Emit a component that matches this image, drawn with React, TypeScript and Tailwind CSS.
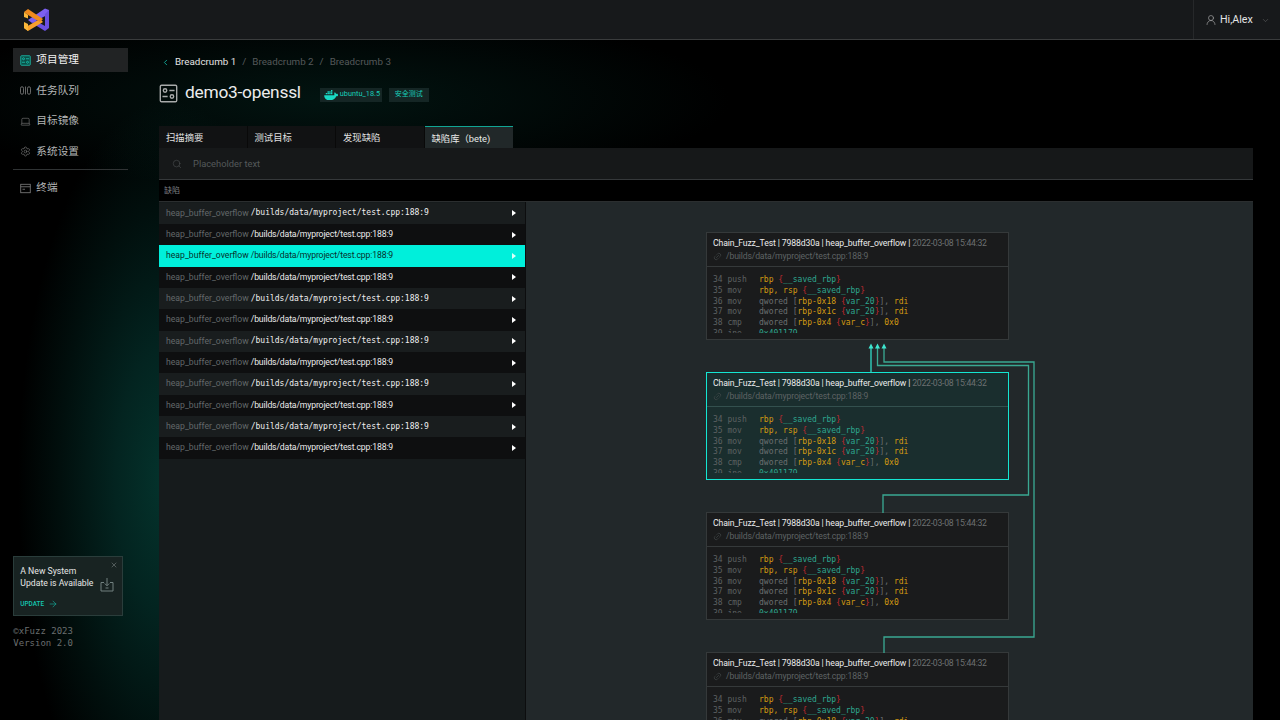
import React from "react";
import { ChevronLeft, ChevronDown, Search, X, ArrowRight, Link2, UserRound, Laptop, Settings } from "lucide-react";

const sans = "[font-family:'Roboto','Noto_Sans_CJK_SC',sans-serif]";
const mono = "[font-family:'DejaVu_Sans_Mono',monospace]";

function Logo() {
  return (
    <svg width="28" height="24" viewBox="0 0 28 24" fill="none">
      <path d="M22 23 L22 18 L12 12.500 L9 15 Z" fill="#6a4fe0" />
      <path d="M1 20 L5 23 L20 14 L17 11 Z" fill="#f8a02c" />
      <path d="M1 14 L5 16 L5 23 L1 20 Z" fill="#fbb73a" />
      <path d="M26 2 L22 0.500 L5 12 L9 15 L26 6 Z" fill="#7d60f2" />
      <path d="M26 2 L26 20 L22 23 L22 6 Z" fill="#6a4fe0" />
      <path d="M1 4 L5 1 L20 11 L17 14 L5 7 Z" fill="#f08a1d" />
      <path d="M1 4 L5 7 L5 10.500 L1 9 Z" fill="#fbb73a" />
    </svg>
  );
}

function ProjectIcon({ size = 11, color = "#19c8b4", fill = "none" }: { size?: number; color?: string; fill?: string }) {
  return (
    <svg width={size} height={size} viewBox="0 0 22 22" fill="none" stroke={color} strokeWidth="1.6">
      <rect x="1.500" y="1.500" width="19" height="19" rx="1.500" fill={fill} />
      <circle cx="7" cy="7.500" r="2" />
      <path d="M12 7.500h6M4 14.500h6" />
      <circle cx="15" cy="14.500" r="2" />
    </svg>
  );
}

function QueueIcon() {
  return (
    <svg width="11" height="11" viewBox="0 0 22 22" fill="none" stroke="#8a8a8a" strokeWidth="1.500">
      <rect x="1" y="3.500" width="6" height="15" rx="3" />
      <path d="M11 3v16" />
      <rect x="15" y="3.500" width="6" height="15" rx="3" />
    </svg>
  );
}

function TerminalIcon() {
  return (
    <svg width="11" height="11" viewBox="0 0 22 22" fill="none" stroke="#8a8a8a" strokeWidth="1.500">
      <rect x="1.500" y="2.500" width="19" height="17" />
      <path d="M1.500 7.500h19M5 12.500h5" />
    </svg>
  );
}

function Docker() {
  return (
    <svg width="14" height="10" viewBox="0 0 24 17" fill="#19d8c4">
      <path d="M23.800 7c-.6-.4-2-.6-3-.3-.2-1-.8-1.900-1.700-2.500l-.5-.3-.4.5c-.5.7-.7 1.900-.6 2.700 0 .3.100.8.400 1.200-.3.200-.8.400-1.400.5H.4c-.2.900-.2 7 5.600 8.400 5 1.200 12 .3 15-6.500 1.200 0 2.500-.4 3-1.500l.2-.4-.4-.3z" />
      <path d="M3 5h2.400v2.400H3zM6 5h2.400v2.400H6zM9 5h2.400v2.400H9zM12 5h2.400v2.400H12zM6 2.200h2.400v2.400H6zM9 2.200h2.400v2.400H9zM12 2.200h2.400v2.400H12zM12-.6h2.400v2.400H12z" />
    </svg>
  );
}

function NavItem({ icon, label, active }: { icon: React.ReactNode; label: string; active?: boolean }) {
  return (
    <div className={`flex h-[24px] items-center gap-[5px] pl-[7px] text-[10.67px] ${active ? "bg-[#212324] text-[#f2f2f2]" : "text-[#b4b6b6]"}`}>
      <span className="flex w-[11px] justify-center">{icon}</span>
      <span>{label}</span>
    </div>
  );
}

function Tab({ label, active }: { label: string; active?: boolean }) {
  return (
    <div className={`flex h-[22px] w-[88.5px] items-center pl-[7px] pt-[2px] text-[9.33px] ${active ? "border-t-[1.33px] border-[#11a594] bg-[#212829] text-[#e8e8e8]" : "border-r border-[#090909] bg-[#111213] text-[#e0e0e0]"}`}>
      {label}
    </div>
  );
}

const rowKinds = [true, false, false, false, true, false, true, false, true, false, true, false];

function Row({ i, isMono }: { i: number; isMono: boolean }) {
  const active = i === 2;
  const bg = active ? "bg-[#00efdb]" : i % 2 === 0 ? "bg-[#191d1e]" : "bg-[#0e0f10]";
  return (
    <div className={`flex h-[21.33px] items-center justify-between pl-[7px] pr-[9px] ${bg}`}>
      <div className="flex items-center gap-[2px] whitespace-nowrap text-[8.67px]">
        <span className={active ? "text-[#08302c]" : "text-[#63686a]"}>heap_buffer_overflow</span>
        <span className={isMono ? `text-[8px] text-[#f0f0f0] ${mono}` : active ? "tracking-[-0.15px] text-[#08302c]" : "tracking-[-0.15px] text-[#ececec]"}>
          /builds/data/myproject/test.cpp:188:9
        </span>
      </div>
      <svg width="4" height="6" viewBox="0 0 4 6"><path d="M0 0 L4 3 L0 6 Z" fill={active ? "#d8fff9" : "#fff"} /></svg>
    </div>
  );
}

const O = ({ children }: { children: React.ReactNode }) => <span className="text-[#d39a12]">{children}</span>;
const T = ({ children }: { children: React.ReactNode }) => <span className="text-[#2ea68f]">{children}</span>;
const R = ({ children }: { children: React.ReactNode }) => <span className="text-[#c02a30]">{children}</span>;

function CodeLine({ n, op, children }: { n: number; op: string; children: React.ReactNode }) {
  return (
    <div className="flex h-[10.67px] shrink-0 items-center whitespace-pre">
      <span className="w-[46px] text-[#5d6162]">{`${n} ${op}`}</span>
      <span className="text-[#6b6f70]">{children}</span>
    </div>
  );
}

function Card({ selected }: { selected?: boolean }) {
  return (
    <div className={`h-[108px] w-[303px] shrink-0 border-[1.33px] ${selected ? "border-[#14e6d2] bg-[#1a2e2e]" : "border-[#35393a] bg-[#1a1b1c]"}`}>
      <div className={`h-[33.5px] border-b-[1.33px] px-[6px] pt-[4px] ${selected ? "border-[#33504e]" : "border-[#35393a]"}`}>
        <div className="flex h-[13px] items-center whitespace-nowrap text-[8.67px] text-[#ececec]">
          <span className="tracking-[-0.12px]">Chain_Fuzz_Test | 7988d30a | heap_buffer_overflow |&nbsp;</span>
          <span className="tracking-[-0.25px] text-[#6d7172]">2022-03-08 15:44:32</span>
        </div>
        <div className="flex h-[13px] items-center gap-[4px] text-[8.67px] tracking-[-0.15px] text-[#5e6364]">
          <Link2 size={9} strokeWidth={1.5} className="-rotate-45 text-[#4b5051]" />
          <span>/builds/data/myproject/test.cpp:188:9</span>
        </div>
      </div>
      <div className={`flex h-[66px] flex-col overflow-hidden px-[6px] pt-[8.5px] text-[8px] ${mono}`}>
        <CodeLine n={34} op="push"><O>rbp</O> <R>{"{"}</R><T>__saved_rbp</T><R>{"}"}</R></CodeLine>
        <CodeLine n={35} op="mov"><O>rbp, rsp</O> <R>{"{"}</R><T>__saved_rbp</T><R>{"}"}</R></CodeLine>
        <CodeLine n={36} op="mov">qwored [<O>rbp-0x18</O> <R>{"{"}</R><T>var_20</T><R>{"}"}</R>], <O>rdi</O></CodeLine>
        <CodeLine n={37} op="mov">dwored [<O>rbp-0x1c</O> <R>{"{"}</R><T>var_20</T><R>{"}"}</R>], <O>rdi</O></CodeLine>
        <CodeLine n={38} op="cmp">dwored [<O>rbp-0x4</O> <R>{"{"}</R><O>var_c</O><R>{"}"}</R>], <O>0x0</O></CodeLine>
        <CodeLine n={39} op="jne"><T>0x401179</T></CodeLine>
      </div>
    </div>
  );
}

function Connectors() {
  const c = "#3aa892";
  return (
    <svg className="pointer-events-none absolute left-0 top-0" width="727" height="519" viewBox="526 201 727 519" fill="none">
      <path d="M871 347V372" stroke="#2fd8c4" strokeWidth="1.33" />
      <path d="M877.500 347V364.500H1028.500V494H883V512" stroke={c} strokeWidth="1.33" />
      <path d="M884 347V361H1034V636H884V652" stroke={c} strokeWidth="1.33" />
      <path d="M868.500 347.500L871 342.500L873.500 347.500Z" fill="#3ee6d0" />
      <path d="M875 347.500L877.500 342.500L880 347.500Z" fill="#3ee6d0" />
      <path d="M881.500 347.500L884 342.500L886.500 347.500Z" fill="#3ee6d0" />
    </svg>
  );
}

export default function App() {
  return (
    <div className={`flex h-[720px] w-[1280px] flex-col overflow-hidden bg-black ${sans}`}>
      <header className="flex h-[40px] shrink-0 items-center justify-between border-b-[1.33px] border-[#3a3c3d] bg-[#17191b]">
        <div className="pl-[23px] pt-[1px]"><Logo /></div>
        <div className="flex h-full w-[87px] items-center gap-[3px] border-l-[1.33px] border-[#26282a] pl-[11px] pt-[1px] text-[10.67px] text-[#e4e4e4]">
          <UserRound size={12} strokeWidth={1.3} className="text-[#a8a8a8]" />
          <span>Hi,Alex</span>
          <ChevronDown size={9} strokeWidth={1.2} className="ml-[5px] text-[#777]" />
        </div>
      </header>
      <div className="flex min-h-0 flex-1 bg-[radial-gradient(ellipse_150px_380px_at_168px_440px,#04342d_0%,#032420_35%,#010f0d_72%,#000_100%),radial-gradient(ellipse_400px_90px_at_330px_60px,#021411_0%,#000_100%)] bg-blend-screen">
        <aside className="flex w-[159px] shrink-0 flex-col justify-between pb-[71px] pl-[13.33px] pr-[31px] pt-[8px]">
          <div className="flex flex-col">
            <div className="flex flex-col gap-[6.67px]">
              <NavItem active label="项目管理" icon={<ProjectIcon fill="#0b4f47" />} />
              <NavItem label="任务队列" icon={<QueueIcon />} />
              <NavItem label="目标镜像" icon={<Laptop size={11} strokeWidth={1.2} className="text-[#8a8a8a]" />} />
              <NavItem label="系统设置" icon={<Settings size={11} strokeWidth={1.2} className="text-[#8a8a8a]" />} />
            </div>
            <div className="mb-[6px] mt-[5.5px] h-[1px] bg-[#303334]" />
            <NavItem label="终端" icon={<TerminalIcon />} />
          </div>
          <div>
            <div className="relative h-[60px] w-[110px] border-[1.33px] border-[#2a3d3b] bg-[#182322] px-[6px] pt-[9px]">
              <X size={8} strokeWidth={1.5} className="absolute right-[4px] top-[4px] text-[#8a9392]" />
              <div className="text-[8.67px] leading-[11.5px] text-[#e6e6e6]">A New System<br />Update is Available</div>
              <svg className="absolute right-[8px] top-[20px]" width="14" height="15" viewBox="0 0 14 15" fill="none" stroke="#71807f" strokeWidth="1">
                <path d="M4 5.500H1V14H13V5.500H10M7 1V8.500M4.800 6.500L7 8.800L9.200 6.500M5.500 11H8.500" />
              </svg>
              <div className="mt-[10px] flex items-center gap-[4px] text-[6.4px] font-medium text-[#14c8b4]">
                UPDATE <ArrowRight size={10} strokeWidth={1.3} />
              </div>
            </div>
            <div className={`mt-[10px] text-[9px] leading-[11.33px] text-[#6a6e6f] ${mono}`}>©xFuzz 2023<br />Version 2.0</div>
          </div>
        </aside>
        <main className="flex min-w-0 flex-1 flex-col pr-[27px]">
          <div className="flex h-[42px] items-center pl-[2px] pt-[2px] text-[9.8px]">
            <ChevronLeft size={9} strokeWidth={2} className="text-[#16c8b4]" />
            <span className="ml-[5px] text-[#e4e4e4]">Breadcrumb 1</span>
            <span className="mx-[6px] text-[#5b5f60]">/</span>
            <span className="text-[#55595a]">Breadcrumb 2</span>
            <span className="mx-[6px] text-[#5b5f60]">/</span>
            <span className="text-[#55595a]">Breadcrumb 3</span>
          </div>
          <div className="flex h-[21px] items-center pt-[1px]">
            <ProjectIcon size={19} color="#a8aaaa" />
            <span className="ml-[7px] text-[17.33px] leading-none tracking-[-0.25px] text-[#ececec]">demo3-openssl</span>
            <span className="ml-[19px] mt-[3px] flex h-[14px] w-[62px] items-center gap-[2px] whitespace-nowrap bg-[#152625] pl-[4px] text-[7.33px] text-[#18cdb8]"><Docker />ubuntu_18.5</span>
            <span className="ml-[7px] mt-[3px] flex h-[14px] items-center bg-[#152625] px-[6px] text-[7px] text-[#18cdb8]">安全测试</span>
          </div>
          <div className="mt-[23px] flex items-end">
            <Tab label="扫描摘要" />
            <Tab label="测试目标" />
            <Tab label="发现缺陷" />
            <Tab active label="缺陷库（bete)" />
          </div>
          <div className="flex h-[32px] shrink-0 items-center gap-[11px] border-b-[1.33px] border-[#35383a] bg-[#161819] pl-[13px] text-[9.33px] text-[#545859]">
            <Search size={10} strokeWidth={1.2} className="text-[#55595a]" />
            <span>Placeholder text</span>
          </div>
          <div className="flex h-[21.67px] shrink-0 items-center border-b-[1.33px] border-[#2b2e2f] bg-black pl-[5px] pt-[2px] text-[8px] text-[#7b7f80]">缺陷</div>
          <div className="flex min-h-0 flex-1">
            <div className="flex w-[367px] shrink-0 flex-col border-r-[1.33px] border-[#0c0d0e] bg-[#161b1c] pt-[1px]">
              {rowKinds.map((m, i) => <Row key={i} i={i} isMono={m} />)}
            </div>
            <div className="relative min-w-0 flex-1 overflow-hidden bg-[#22282a]">
              <div className="flex flex-col gap-[32px] pl-[180px] pt-[30.5px]">
                <Card />
                <Card selected />
                <Card />
                <Card />
              </div>
              <Connectors />
            </div>
          </div>
        </main>
      </div>
    </div>
  );
}
